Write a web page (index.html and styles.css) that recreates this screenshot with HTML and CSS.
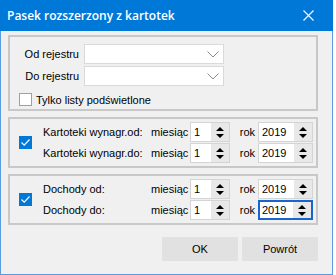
FILE: index.html
```html
<!DOCTYPE html>
<html>
<head>
  <link rel="stylesheet" href="styles.css">
</head>
<body>
  <div class="window">
    <div class="titlebar">
      <span class="title">Pasek rozszerzony z kartotek</span>
      <svg class="close" width="11" height="11" viewBox="0 0 11 11">
        <path d="M0.5 0.5L10.5 10.5M10.5 0.5L0.5 10.5" stroke="#fff" stroke-width="1.1" fill="none"/>
      </svg>
    </div>

    <div class="content">
      <!-- register range -->
      <div class="group group-reg">
        <div class="field-row">
          <label class="reg-label">Od rejestru</label>
          <div class="combo">
            <svg class="chevron" width="12" height="7" viewBox="0 0 12 7"><path d="M0.5 0.5L6 6L11.5 0.5" stroke="#8a8a8a" fill="none"/></svg>
          </div>
        </div>
        <div class="field-row">
          <label class="reg-label">Do rejestru</label>
          <div class="combo">
            <svg class="chevron" width="12" height="7" viewBox="0 0 12 7"><path d="M0.5 0.5L6 6L11.5 0.5" stroke="#8a8a8a" fill="none"/></svg>
          </div>
        </div>
        <div class="check-row">
          <span class="checkbox"></span>
          <span>Tylko listy podświetlone</span>
        </div>
      </div>

      <!-- kartoteki -->
      <div class="group group-range">
        <span class="checkbox checked">
          <svg width="13" height="13" viewBox="0 0 13 13"><path d="M2.5 6.5L5.2 9.2L10.5 3.5" stroke="#fff" stroke-width="1.2" fill="none"/></svg>
        </span>
        <div class="rows">
          <div class="range-row">
            <span class="range-label">Kartoteki wynagr.od:</span>
            <span class="unit">miesiąc</span>
            <div class="spin spin-month"><span class="val">1</span><span class="arrows"><i class="up"></i><i class="down"></i></span></div>
            <span class="unit-rok">rok</span>
            <div class="spin spin-year"><span class="val">2019</span><span class="arrows"><i class="up"></i><i class="down"></i></span></div>
          </div>
          <div class="range-row">
            <span class="range-label">Kartoteki wynagr.do:</span>
            <span class="unit">miesiąc</span>
            <div class="spin spin-month"><span class="val">1</span><span class="arrows"><i class="up"></i><i class="down"></i></span></div>
            <span class="unit-rok">rok</span>
            <div class="spin spin-year"><span class="val">2019</span><span class="arrows"><i class="up"></i><i class="down"></i></span></div>
          </div>
        </div>
      </div>

      <!-- dochody -->
      <div class="group group-range">
        <span class="checkbox checked">
          <svg width="13" height="13" viewBox="0 0 13 13"><path d="M2.5 6.5L5.2 9.2L10.5 3.5" stroke="#fff" stroke-width="1.2" fill="none"/></svg>
        </span>
        <div class="rows">
          <div class="range-row">
            <span class="range-label">Dochody od:</span>
            <span class="unit">miesiąc</span>
            <div class="spin spin-month"><span class="val">1</span><span class="arrows"><i class="up"></i><i class="down"></i></span></div>
            <span class="unit-rok">rok</span>
            <div class="spin spin-year"><span class="val">2019</span><span class="arrows"><i class="up"></i><i class="down"></i></span></div>
          </div>
          <div class="range-row">
            <span class="range-label">Dochody do:</span>
            <span class="unit">miesiąc</span>
            <div class="spin spin-month"><span class="val">1</span><span class="arrows"><i class="up"></i><i class="down"></i></span></div>
            <span class="unit-rok">rok</span>
            <div class="spin spin-year focused"><span class="val">2019</span><span class="arrows"><i class="up"></i><i class="down"></i></span></div>
          </div>
        </div>
      </div>

      <div class="buttons">
        <button class="btn">OK</button>
        <button class="btn">Powrót</button>
      </div>
    </div>
  </div>
</body>
</html>
```

FILE: styles.css
```css
body {
  margin: 0;
  background-color: #fff;
  font-family: "Liberation Sans", Arial, sans-serif;
  font-size: 11px;
  color: #000;
}
.window {
  width: 333px;
  height: 275px;
  box-sizing: border-box;
  background-color: #f0f0f0;
  border: 1px solid #5b9be0;
  border-top: none;
  display: flex;
  flex-direction: column;
}
.titlebar {
  height: 31px;
  margin: 0 -1px;
  background-color: #0078d7;
  color: #fff;
  display: flex;
  align-items: center;
  justify-content: space-between;
  padding: 0 19px 0 7px;
}
.title {
  font-family: "Open Sans", sans-serif;
  font-size: 12px;
  font-weight: 600;
}
.content {
  padding: 4px 0 0 7px;
  display: flex;
  flex-direction: column;
  gap: 6px;
}
.group {
  width: 310px;
  box-sizing: border-box;
  border: 2px solid #c8c8c8;
}
.group-reg {
  padding: 7px 0 3px 0;
}
.field-row {
  display: flex;
  align-items: center;
  height: 20px;
  margin-bottom: 2px;
}
.reg-label {
  width: 74px;
  padding-right: 5px;
  box-sizing: border-box;
  text-align: right;
}
.combo {
  width: 140px;
  height: 20px;
  box-sizing: border-box;
  background-color: #fff;
  border: 1px solid #dadada;
  display: flex;
  align-items: center;
  justify-content: flex-end;
  padding-right: 4px;
}
.check-row {
  display: flex;
  align-items: center;
  gap: 4px;
  margin: 7px 0 0 9px;
}
.checkbox {
  width: 13px;
  height: 13px;
  box-sizing: border-box;
  border: 1px solid #a0a0a0;
  background-color: #fff;
  display: block;
  flex: none;
}
.checkbox.checked {
  border: none;
  background-color: #0078d7;
}
.checkbox svg {
  display: block;
}
.group-range {
  height: 51px;
  display: flex;
  align-items: center;
  padding-left: 9px;
}
.rows {
  margin-left: 11px;
  display: flex;
  flex-direction: column;
  gap: 2px;
}
.range-row {
  display: flex;
  align-items: center;
  height: 19px;
}
.range-label {
  width: 108px;
}
.unit {
  width: 39px;
}
.unit-rok {
  width: 28px;
  padding-right: 3px;
  box-sizing: border-box;
  text-align: right;
}
.spin {
  height: 20px;
  box-sizing: border-box;
  background-color: #fff;
  border: 1px solid #d4d4d4;
  display: flex;
  align-items: stretch;
}
.spin-month {
  width: 40px;
}
.spin-year {
  width: 55px;
}
.spin.focused {
  border: 2px solid #1a63d1;
}
.val {
  flex: 1;
  padding-left: 3px;
  display: flex;
  align-items: center;
}
.focused .val {
  padding-left: 2px;
}
.arrows {
  width: 18px;
  background-color: #e8e8e8;
  display: flex;
  flex-direction: column;
  align-items: center;
  justify-content: center;
  gap: 3px;
}
.arrows i {
  width: 0;
  height: 0;
  border-left: 4px solid transparent;
  border-right: 4px solid transparent;
}
.arrows .up {
  border-bottom: 4px solid #000;
}
.arrows .down {
  border-top: 4px solid #000;
}
.buttons {
  display: flex;
  justify-content: flex-end;
  gap: 4px;
  width: 310px;
  margin-top: 6px;
}
.btn {
  width: 76px;
  height: 24px;
  border: 1px solid #e1e1e1;
  background-color: #e1e1e1;
  font-family: "Liberation Sans", Arial, sans-serif;
  font-size: 11px;
  color: #000;
  padding: 0;
}
```
